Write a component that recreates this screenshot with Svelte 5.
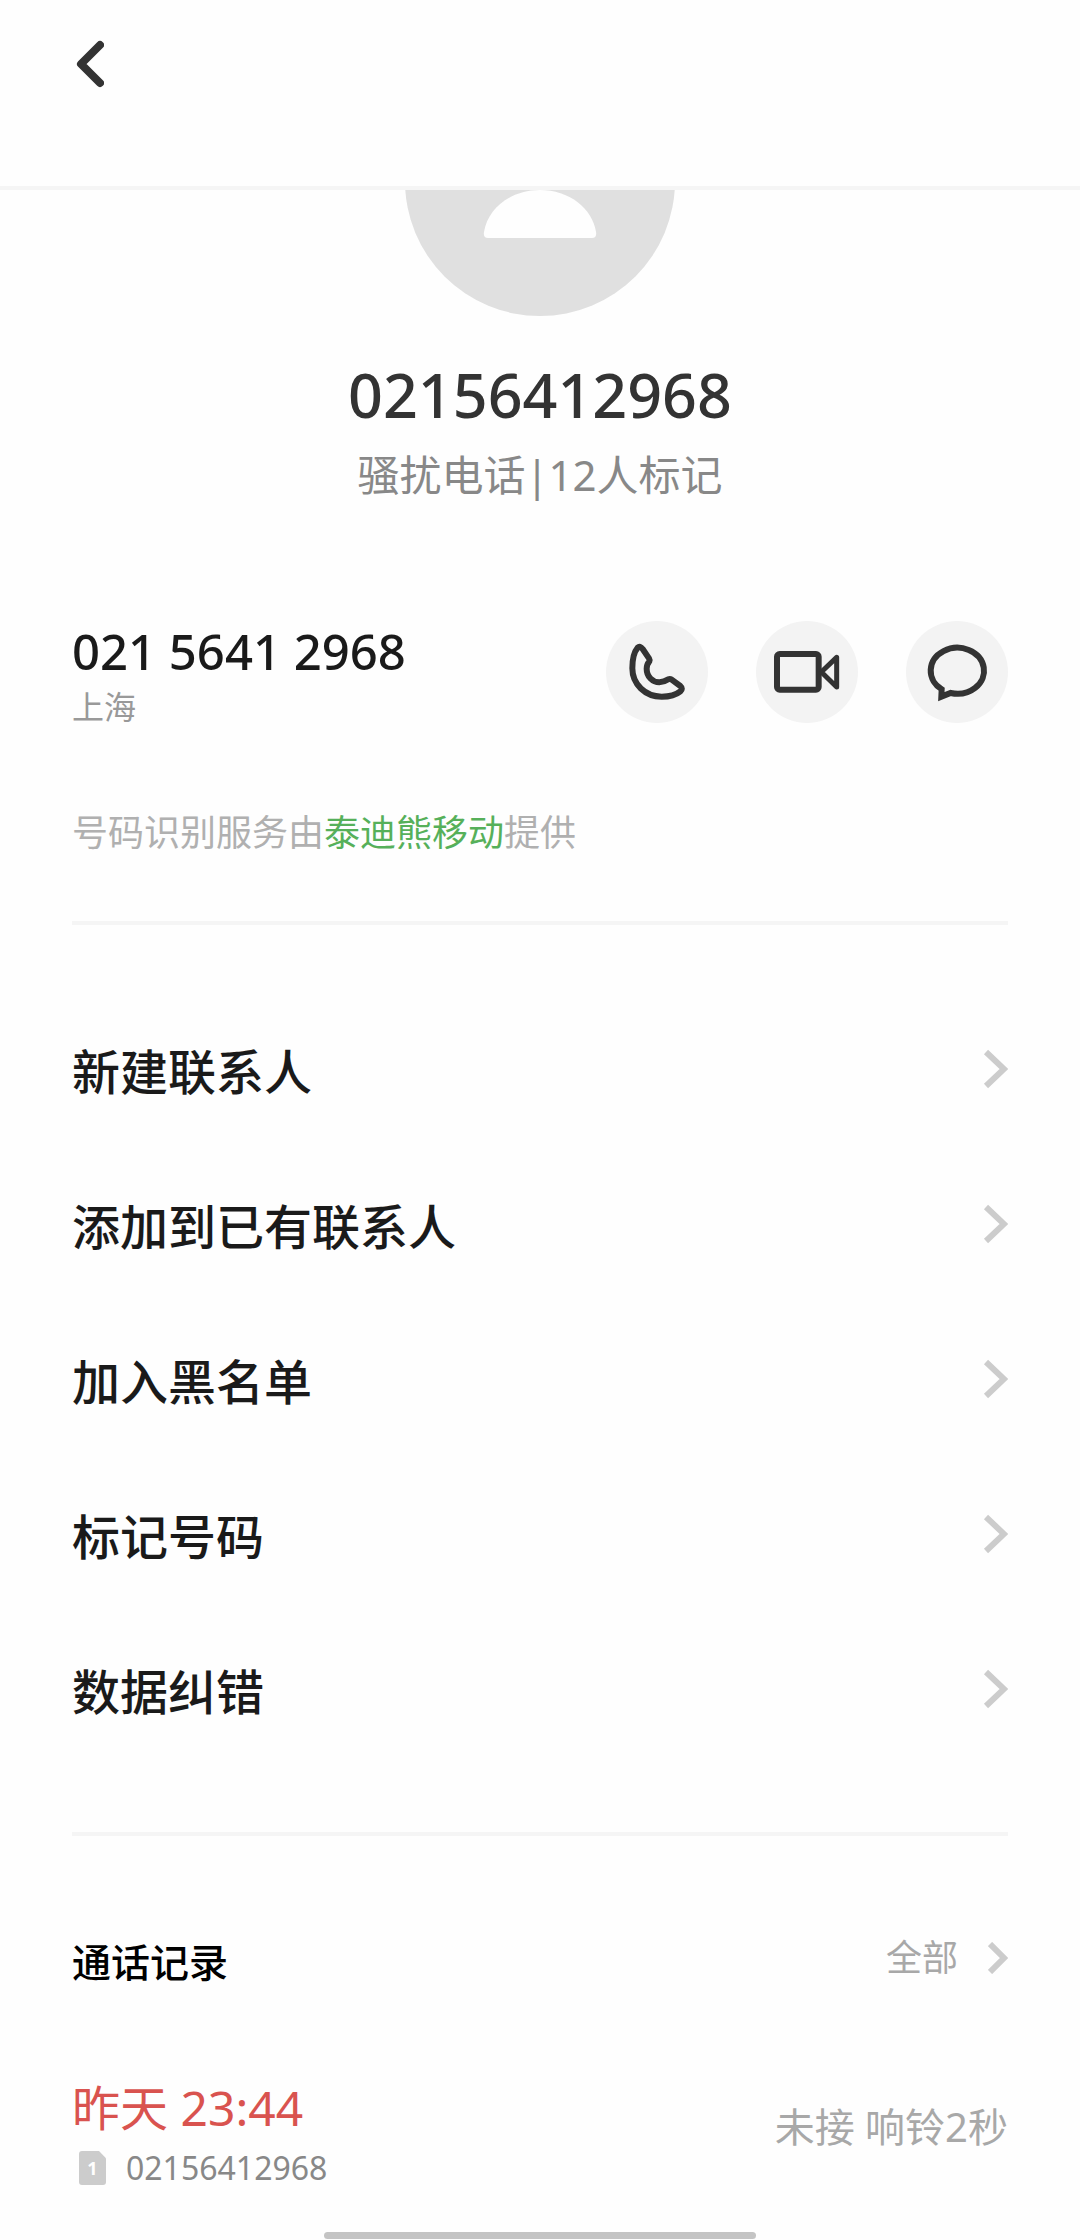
<script lang="ts">
    const phone = '02156412968';

    const actions = ['新建联系人', '添加到已有联系人', '加入黑名单', '标记号码', '数据纠错'];
</script>

<svelte:head>
    <title>{phone}</title>
</svelte:head>

<header class="topbar">
    <button class="back" aria-label="返回">
        <svg width="32" height="48" viewBox="0 0 32 48">
            <path d="M28 5 L9 24 L28 43" />
        </svg>
    </button>
</header>

<main>
    <section class="profile">
        <div class="avatar">
            <svg viewBox="0 0 270 270">
                <circle cx="135" cy="135" r="135" fill="#e0e0e0" />
                <circle cx="135" cy="102" r="32" fill="#fefefe" />
                <path
                    d="M83 192 Q78 192 79 186 C83 162 106 144 135 144 C164 144 187 162 191 186 Q192 192 187 192 Z"
                    fill="#fefefe"
                />
            </svg>
        </div>
        <h1>{phone}</h1>
        <p class="mark">骚扰电话|12人标记</p>
    </section>

    <section class="contact">
        <div class="number">
            <span class="digits">021 5641 2968</span>
            <span class="city">上海</span>
        </div>
        <div class="buttons">
            <button class="round" aria-label="拨打电话">
                <svg viewBox="0 0 306 306">
                    <path
                        d="M95 80 C85 92 79 116 79 142 C79 190 118 227 167 227 C192 227 212 220 223 211 C229 206 229 200 223 195 L197 176 Q192 173 187 175 C178 181 170 184 160 184 C140 184 122 167 122 143 C122 134 125 127 130 121 Q132 117 129 112 L110 84 Q102 73 95 80 Z"
                    />
                </svg>
            </button>
            <button class="round" aria-label="视频通话">
                <svg viewBox="0 0 306 306">
                    <rect x="63" y="99" width="125" height="107" rx="8" />
                    <path d="M196 153 L242 109 V198 Z" stroke-width="15" />
                </svg>
            </button>
            <button class="round" aria-label="发送短信">
                <svg viewBox="0 0 306 306">
                    <path d="M107 205 A80 69 0 1 1 134 216 L106 227 Z" class="bubble" />
                </svg>
            </button>
        </div>
    </section>

    <p class="provider">号码识别服务由<a href="#provider">泰迪熊移动</a>提供</p>

    <hr />

    <ul class="actions">
        {#each actions as action}
            <li>
                <button>
                    <span>{action}</span>
                    <svg width="26" height="40" viewBox="0 0 26 40">
                        <path d="M4 3 L22 20 L4 37" />
                    </svg>
                </button>
            </li>
        {/each}
    </ul>

    <hr />

    <section class="history">
        <div class="history-head">
            <h2>通话记录</h2>
            <a href="#all">
                全部
                <svg width="20" height="32" viewBox="0 0 20 32">
                    <path d="M2 2 L16 16 L2 30" />
                </svg>
            </a>
        </div>
        <div class="call">
            <div>
                <div class="time">昨天 23:44</div>
                <div class="line">
                    <span class="sim">1</span>
                    <span>{phone}</span>
                </div>
            </div>
            <span class="status">未接 响铃2秒</span>
        </div>
    </section>
</main>

<div class="home-indicator"></div>

<style>
    :global(body) {
        background: #fefefe;
    }

    :global(#app) {
        font-family: 'Noto Sans', 'Noto Sans CJK SC', sans-serif;
        color: #1a1a1a;
    }

    h1,
    h2,
    p,
    ul {
        margin: 0;
        padding: 0;
        font-weight: 400;
    }

    button {
        border: none;
        padding: 0;
        background: none;
        font: inherit;
        color: inherit;
        cursor: pointer;
    }

    a {
        text-decoration: none;
    }

    svg {
        display: block;
        fill: none;
    }

    hr {
        height: 4px;
        margin: 0;
        border: none;
        background: #f5f5f5;
    }

    .topbar {
        box-sizing: border-box;
        height: 190px;
        padding: 40px 72px 0;
        border-bottom: 4px solid #f5f5f5;
    }

    .back path {
        stroke: #333;
        stroke-width: 8;
        stroke-linecap: round;
        stroke-linejoin: round;
    }

    main {
        padding: 0 72px;
    }

    .profile {
        display: flex;
        flex-direction: column;
        align-items: center;
        overflow: hidden;
    }

    /* scrolled part way under the top bar */
    .avatar {
        width: 270px;
        margin-top: -144px;
    }

    h1 {
        margin-top: 43px;
        font-size: 61px;
        font-weight: 500;
        line-height: 72px;
        color: #333;
    }

    .mark {
        margin-top: 16px;
        font-size: 42px;
        line-height: 56px;
        color: #888;
    }

    .contact {
        display: flex;
        justify-content: space-between;
        align-items: center;
        margin-top: 112px;
    }

    .number {
        display: flex;
        flex-direction: column;
        gap: 4px;
        padding-top: 6px;
    }

    .digits {
        font-size: 49px;
        font-weight: 500;
        line-height: 60px;
    }

    .city {
        font-size: 32px;
        line-height: 44px;
        color: #999;
    }

    .buttons {
        display: flex;
        gap: 48px;
    }

    .round {
        width: 102px;
        height: 102px;
        border-radius: 50%;
        background: #f3f3f3;
    }

    .round svg {
        stroke: #333;
        stroke-width: 18;
        stroke-linejoin: round;
    }

    .round .bubble {
        stroke-linejoin: miter;
    }

    .provider {
        margin: 80px 0 64px;
        font-size: 36px;
        line-height: 48px;
        color: #b0b0b0;
    }

    .provider a {
        color: #56b05a;
    }

    .actions {
        margin: 66px 0;
        list-style: none;
    }

    .actions button {
        display: flex;
        justify-content: space-between;
        align-items: center;
        width: 100%;
        height: 155px;
        font-size: 48px;
        font-weight: 500;
    }

    .actions path,
    .history path {
        stroke: #ccc;
        stroke-width: 6;
    }

    .history {
        padding-top: 98px;
    }

    .history-head {
        display: flex;
        justify-content: space-between;
        align-items: flex-start;
    }

    h2 {
        font-size: 39px;
        font-weight: 500;
        line-height: 56px;
        color: #000;
    }

    .history-head a {
        display: flex;
        align-items: center;
        gap: 30px;
        font-size: 36px;
        line-height: 48px;
        color: #a8a8a8;
    }

    .call {
        display: flex;
        justify-content: space-between;
        align-items: flex-start;
        margin-top: 88px;
    }

    .time {
        font-size: 48px;
        line-height: 60px;
        color: #d9534f;
    }

    .line {
        display: flex;
        align-items: center;
        gap: 20px;
        margin-top: 8px;
        padding-left: 7px;
        font-size: 32px;
        line-height: 44px;
        color: #888;
    }

    .sim {
        width: 27px;
        height: 34px;
        border-radius: 3px;
        background: #ccc;
        clip-path: polygon(0 0, 74% 0, 100% 21%, 100% 100%, 0 100%);
        font-size: 18px;
        font-weight: 700;
        line-height: 34px;
        text-align: center;
        color: #fefefe;
    }

    .status {
        margin-top: 20px;
        font-size: 40px;
        line-height: 58px;
        color: #a8a8a8;
    }

    .home-indicator {
        position: fixed;
        bottom: 1px;
        left: 30%;
        width: 40%;
        height: 7px;
        border-radius: 4px;
        background: #c4c4c4;
    }
</style>
